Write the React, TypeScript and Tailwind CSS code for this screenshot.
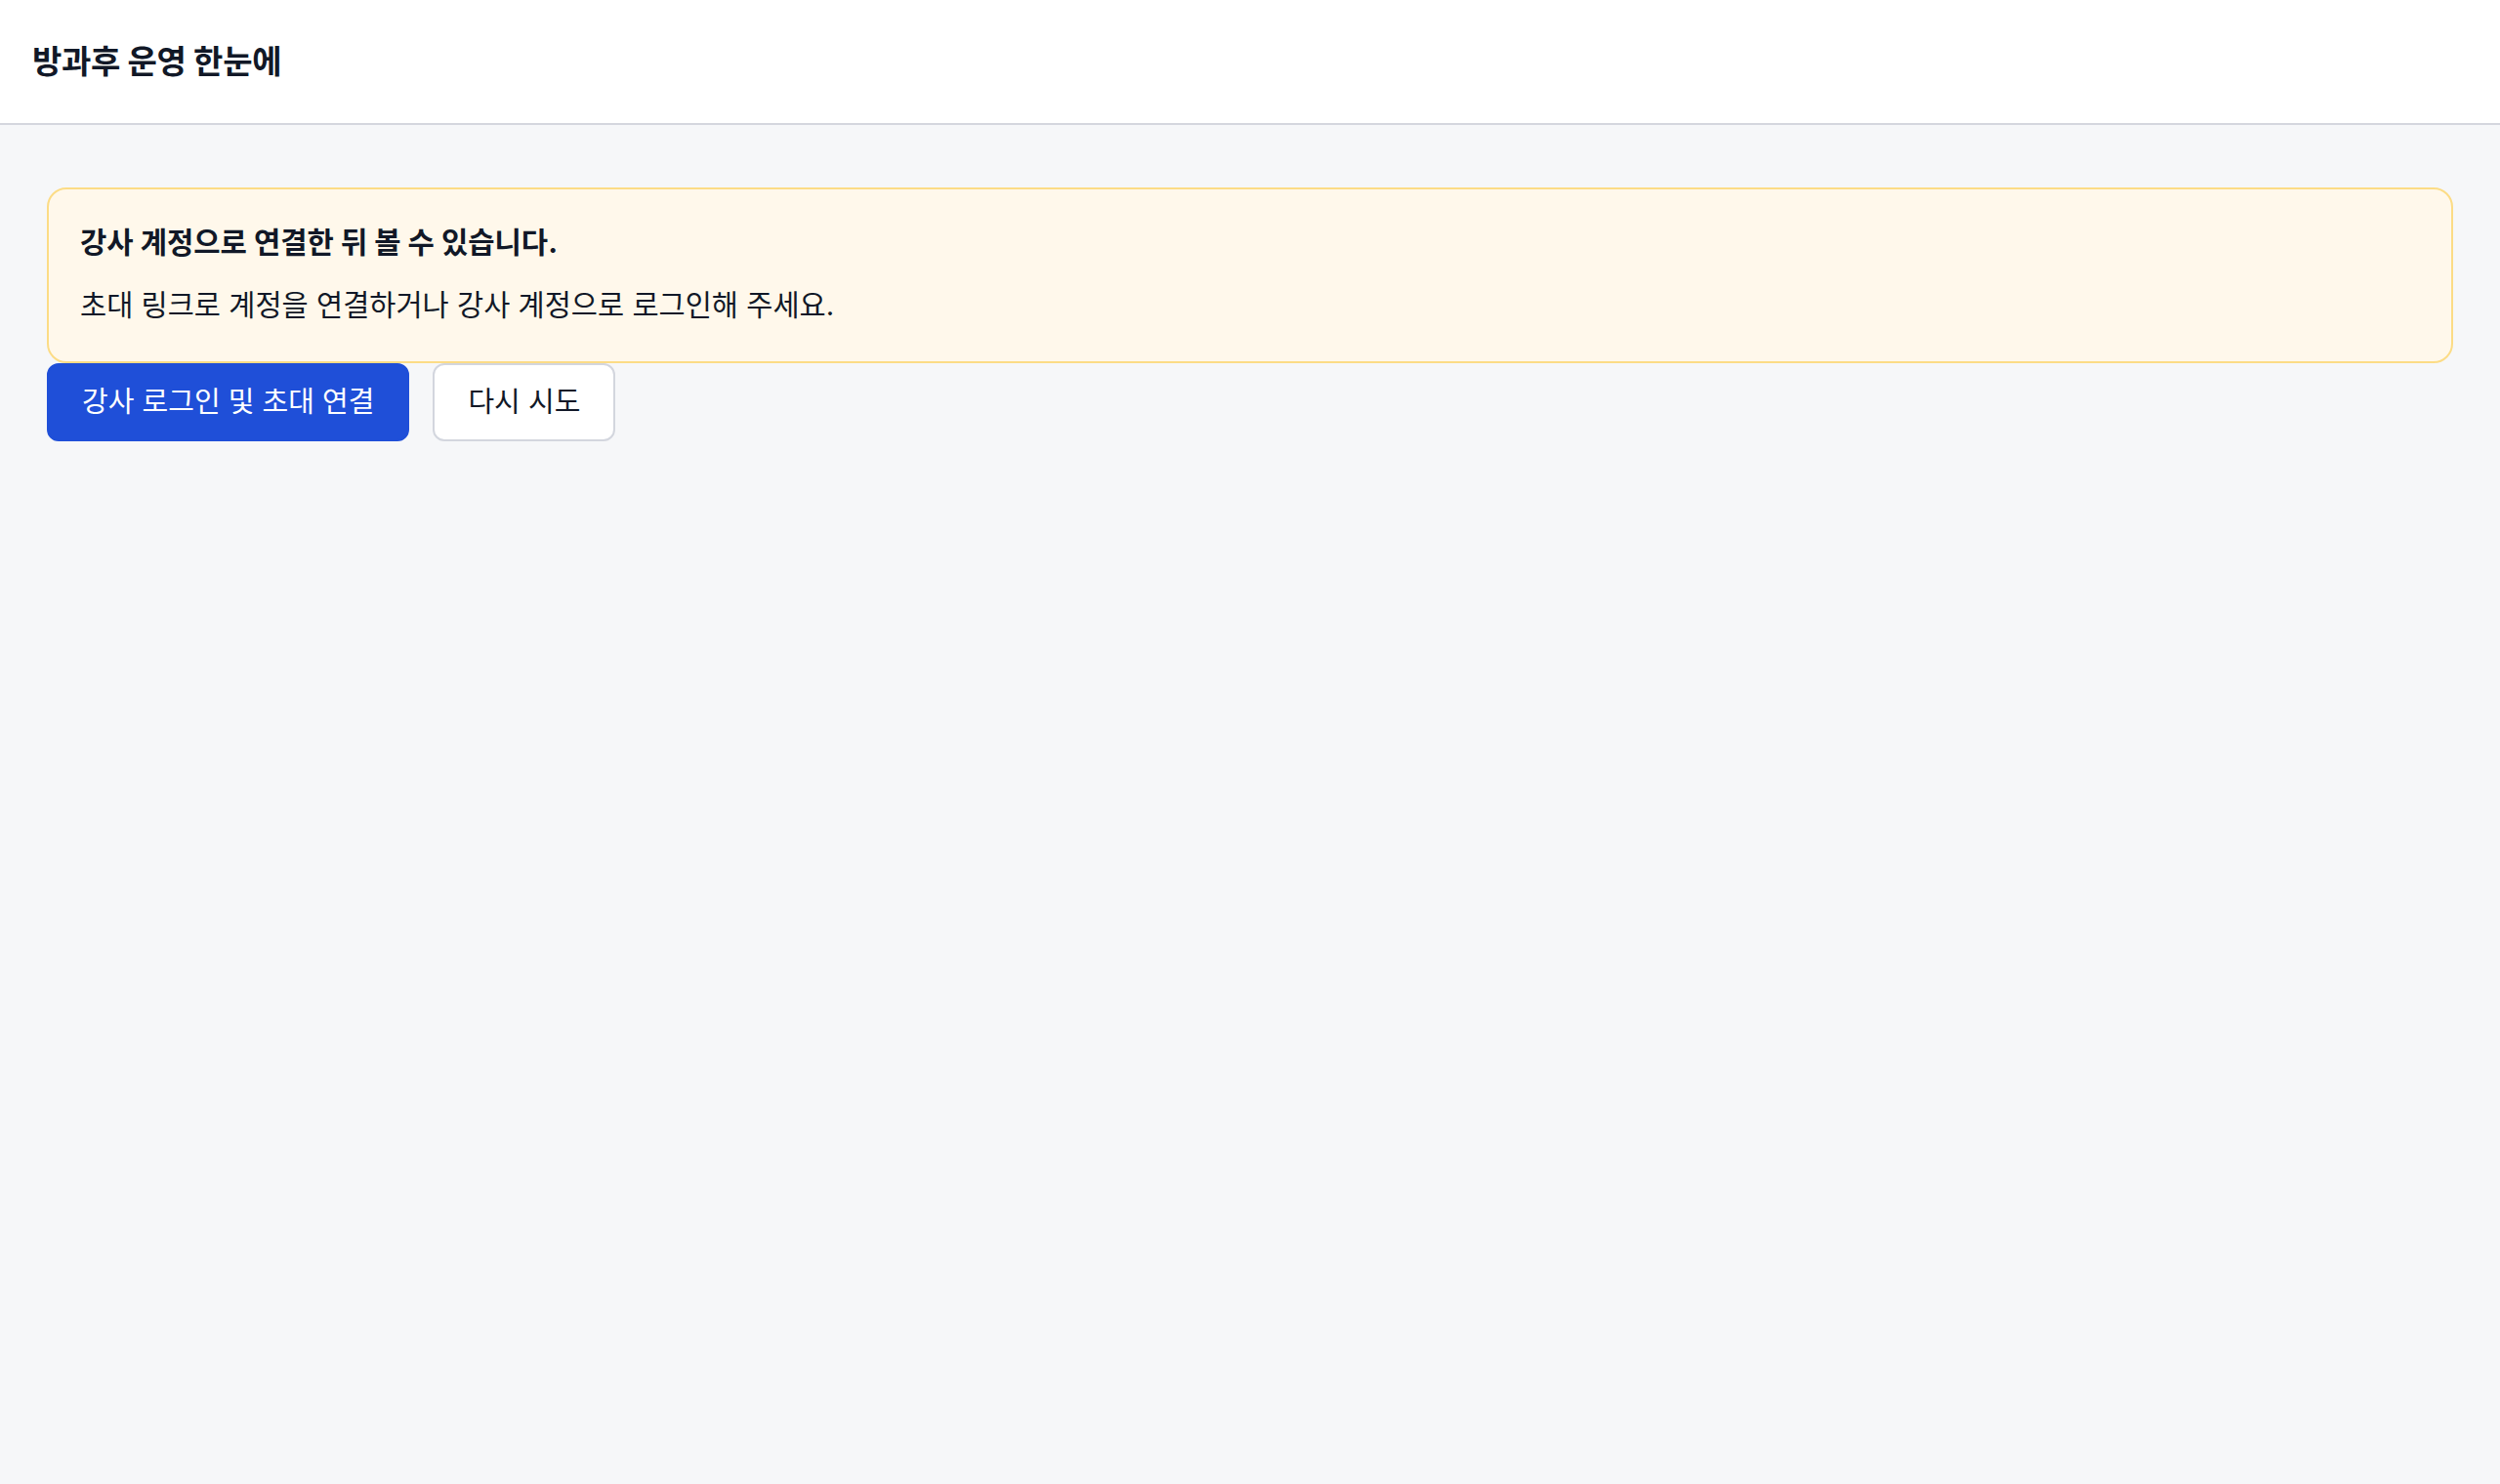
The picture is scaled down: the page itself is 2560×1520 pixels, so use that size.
import React from 'react';

const FONT = "font-['Inter','Noto_Sans_CJK_KR',sans-serif]";

export default function App() {
  return (
    <div className={`min-h-screen bg-[#f6f7f9] text-[#111827] ${FONT}`}>
      {/* Header */}
      <header className="h-[128px] bg-white border-b-2 border-[#d4d6de] flex items-center px-[33px]">
        <h1 className="text-[33px] font-bold tracking-[-0.01em] leading-none">방과후 운영 한눈에</h1>
      </header>

      <main className="px-12 pt-16">
        {/* Notice */}
        <div className="rounded-[20px] border-2 border-[#fcdc86] bg-[#fff8eb] px-8 pt-8 pb-[36px]">
          <p className="text-[29.7px] font-bold leading-[44px]">강사 계정으로 연결한 뒤 볼 수 있습니다.</p>
          <p className="mt-5 text-[29.5px] leading-[44px]">초대 링크로 계정을 연결하거나 강사 계정으로 로그인해 주세요.</p>
        </div>

        {/* Actions */}
        <div className="flex items-center gap-6">
          <button className="rounded-xl border-2 border-[#1f4fd8] bg-[#1f4fd8] px-[34px] py-[18px] text-[29px] leading-[40px] text-white">
            강사 로그인 및 초대 연결
          </button>
          <button className="rounded-xl border-2 border-[#d3d6de] bg-white px-[34px] py-[18px] text-[29px] leading-[40px] text-[#111827]">
            다시 시도
          </button>
        </div>
      </main>
    </div>
  );
}
